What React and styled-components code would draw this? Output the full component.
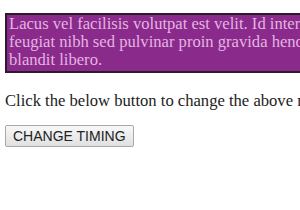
import React from "react";
import styled, { createGlobalStyle } from "styled-components";

const Global = createGlobalStyle`
  html, body { margin: 0; padding: 0; background: #fff; }
  body { font-family: "Liberation Serif", "Times New Roman", serif; font-size: 16.6px; color: #222; overflow: hidden; }
`;

const Page = styled.div`
  padding: 13px 0 0 5px;
  width: 480px;
`;

const Marquee = styled.div`
  background: #8a2a8a;
  color: #e3b4e3;
  border: 2px solid #2d1a2d;
  padding: 0 2px 2px 2px;
  line-height: 18px;
  white-space: nowrap;
  overflow: hidden;
`;

const Note = styled.p`
  margin: 18px 0 15px;
  line-height: 19px;
  color: #222;
  white-space: nowrap;
`;

const Button = styled.button`
  font-family: "Liberation Sans", Arial, sans-serif;
  font-size: 14px;
  color: #222;
  background: linear-gradient(#f8f8f8, #e0e0e0);
  border: 1px solid #a9a9a9;
  border-radius: 2px;
  padding: 0 7px;
  height: 22px;
  line-height: 20px;
`;

export default function App() {
  return (
    <>
      <Global />
      <Page>
        <Marquee>
          Lacus vel facilisis volutpat est velit. Id interdum velit laoreet id donec
          <br />
          feugiat nibh sed pulvinar proin gravida hendrerit lectus a. Quis
          <br />
          blandit libero.
        </Marquee>
        <Note>Click the below button to change the above marquee timing.</Note>
        <Button>CHANGE TIMING</Button>
      </Page>
    </>
  );
}
